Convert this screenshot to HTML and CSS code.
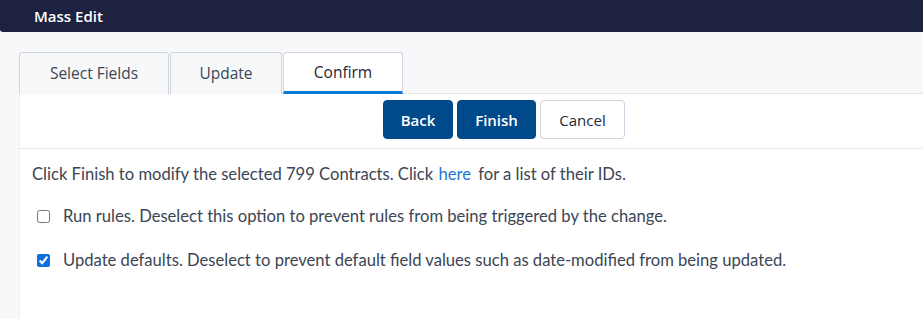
FILE: index.html
```html
<!DOCTYPE html>
<html lang="en">
<head>
    <meta charset="UTF-8">
    <meta name="viewport" content="width=device-width, initial-scale=1.0">
    <title>Mass Edit</title>
    <link rel="stylesheet" href="styles.css">
</head>
<body>
    <div class="header">
        <span class="header-title">Mass Edit</span>
    </div>

    <div class="page">
        <div class="tabs">
            <div class="tab tab-select">Select Fields</div>
            <div class="tab tab-update">Update</div>
            <div class="tab tab-confirm active">Confirm</div>
        </div>

        <div class="panel">
            <div class="actions">
                <button type="button" class="btn btn-primary btn-back">Back</button>
                <button type="button" class="btn btn-primary btn-finish">Finish</button>
                <button type="button" class="btn btn-outline btn-cancel">Cancel</button>
            </div>

            <div class="body">
                <p class="summary">Click Finish to modify the selected 799 Contracts. Click <a href="#" class="link">here</a> for a list of their IDs.</p>

                <label class="option">
                    <input type="checkbox">
                    <span>Run rules. Deselect this option to prevent rules from being triggered by the change.</span>
                </label>

                <label class="option">
                    <input type="checkbox" checked>
                    <span>Update defaults. Deselect to prevent default field values such as date-modified from being updated.</span>
                </label>
            </div>
        </div>
    </div>
</body>
</html>
```

FILE: styles.css
```css
body {
    margin: 0;
    font-family: "Open Sans", "Noto Sans", Arial, sans-serif;
    background-color: #f7f8fa;
    height: 319px;
    overflow: hidden;
}
.header {
    height: 32px;
    background-color: #1c2240;
    border-bottom-left-radius: 3px;
    display: flex;
    align-items: center;
    padding-left: 34px;
}
.header-title {
    color: #ffffff;
    font-size: 15px;
    font-weight: 600;
}
.page {
    padding: 20px 0 0 19px;
}
.tabs {
    display: flex;
    gap: 1px;
    height: 42px;
}
.tab {
    box-sizing: border-box;
    display: flex;
    align-items: center;
    justify-content: center;
    height: 42px;
    border: 1px solid #d3d6de;
    border-bottom: none;
    border-radius: 3px 3px 0 0;
    font-size: 15.5px;
    color: #3d4654;
    background-color: #f7f8fa;
    padding-bottom: 2px;
}
.tab-select { width: 150px; }
.tab-update { width: 112px; }
.tab-confirm { width: 120px; }
.tab.active {
    background-color: #ffffff;
    color: #1f2633;
    border-bottom: 3px solid #0b7ad6;
    padding-bottom: 0;
}
.panel {
    background-color: #ffffff;
    border-top: 1px solid #e4e7eb;
    border-left: 1px solid #eceef1;
    margin-top: -1px;
    height: 240px;
}
.actions {
    display: flex;
    gap: 4px;
    padding: 6px 0 9px 363px;
    border-bottom: 1px solid #e6e8eb;
}
.btn {
    height: 39px;
    border-radius: 4px;
    font-family: "Open Sans", "Noto Sans", Arial, sans-serif;
    font-size: 15px;
    cursor: pointer;
}
.btn-primary {
    background-color: #004a8b;
    color: #ffffff;
    border: 1px solid #004a8b;
    font-weight: 600;
}
.btn-back { width: 70px; }
.btn-finish { width: 79px; }
.btn-outline {
    background-color: #ffffff;
    color: #1f2a3a;
    border: 1px solid #c8d3de;
    width: 85px;
}
.body {
    padding: 15px 0 0 12px;
    font-family: Lato, "Liberation Sans", sans-serif;
    font-size: 16.6px;
    color: #3b4554;
}
.summary {
    margin: 0 0 22px 0;
    line-height: 20px;
}
.link {
    color: #1b78d0;
    text-decoration: none;
    margin: 0 3px 0 1px;
}
.option {
    display: flex;
    align-items: center;
    gap: 13px;
    padding-left: 5px;
    margin-bottom: 24px;
    line-height: 20px;
}
.option input {
    margin: 0;
    width: 13px;
    height: 13px;
    accent-color: #0b6fe0;
}
```
